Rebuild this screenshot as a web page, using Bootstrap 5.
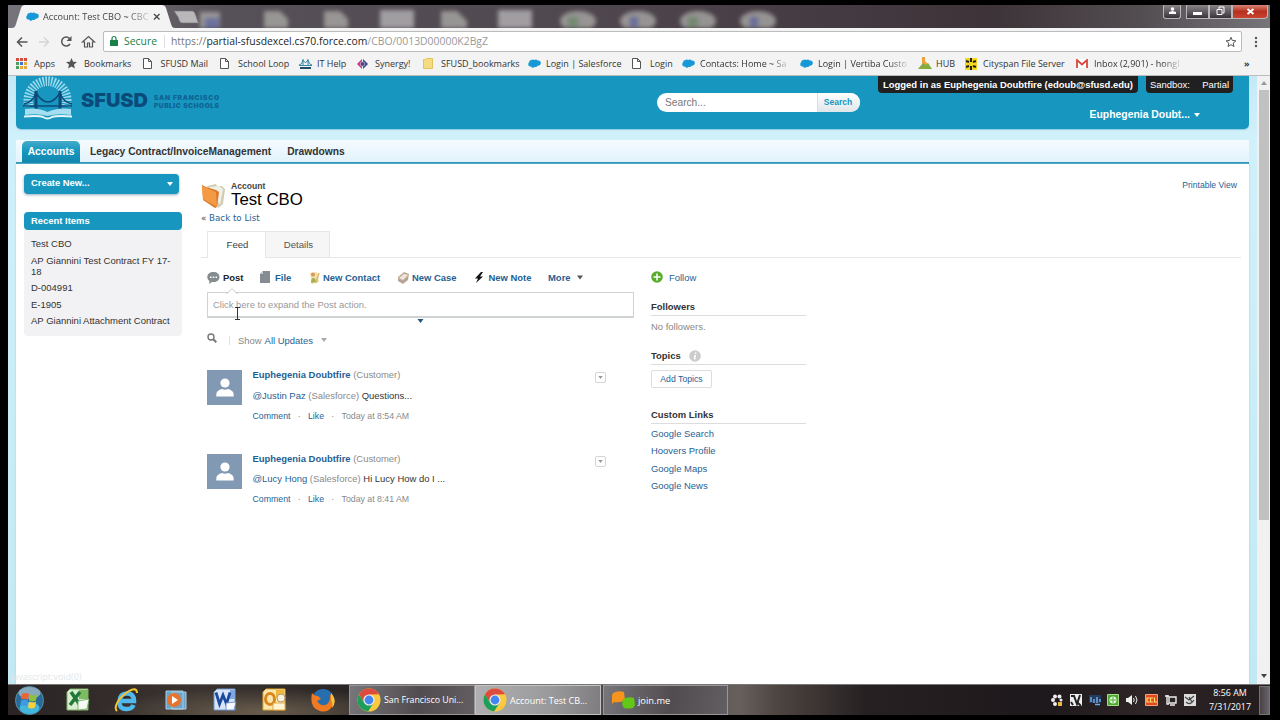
<!DOCTYPE html>
<html lang="en">
<head>
    <meta charset="UTF-8">
    <meta name="viewport" content="width=device-width, initial-scale=1.0">
    <title>Account: Test CBO ~ CBO</title>
    <link href="https://cdn.jsdelivr.net/npm/bootstrap@5.3.0/dist/css/bootstrap.min.css" rel="stylesheet">
    <style>
        body { background: #000; width: 1280px; height: 720px; overflow: hidden; padding: 5px 10px 5px 8px; font: 9.45px/11px "Liberation Sans", Arial, sans-serif; color: #444; }
        a { color: #1f5f94; text-decoration: none; }
        svg { display: block; flex: none; }
        .ui-font { font-family: "Open Sans", "Noto Sans", sans-serif; }

        /* browser window */
        .titlebar { height: 23px; background: linear-gradient(90deg, #77737a 0, #6d6970 9%, #565058 17%, #50484f 45%, #463c44 62%, #3d3338 78%, #534e52 90%, #77757a 100%); }
        .glass { left: 190px; top: 0; filter: blur(2px); opacity: .8; }
        .tab-shape { left: 4px; top: 0; }
        .tab-label { left: 35px; top: 5px; font-size: 9.15px; line-height: 13px; color: #444; }
        .win-btns { top: 0; right: 2px; height: 14px; }
        .win-btn { width: 23px; height: 14px; border: 1px solid #b9b5b9; border-top: 0; background: linear-gradient(#8a8589, #39343a); }
        .win-close { width: 36px; background: linear-gradient(#d78577, #b7301f 50%, #c9442f); border-radius: 0 0 4px 0; }
        .win-user { width: 18px; margin-right: 5px; border-radius: 0 0 3px 3px; }
        .toolbar { height: 24px; background: #f3f3f3; padding-left: 8px; }
        .omnibox { width: 1139px; height: 21px; margin-top: 3px; border: 1px solid #bcbcbc; border-radius: 2px; background: #fff; font-size: 10.4px; color: #999; }
        .omni-sep { height: 13px; margin: 0 6px 0 7px; }
        .bookmarks { height: 24px; background: #f3f3f3; border-bottom: 1px solid #bbb; font-size: 9px; color: #333; grid-template-columns: 50px 76.5px 77.5px 79px 58px 66px 105px 104px 50px 118px 118px 47px 111px 1fr 18px; }
        .bookmarks > div { display: grid; grid-template-columns: 18px auto; align-items: center; justify-content: start; white-space: nowrap; }
        .fade-end { -webkit-mask-image: linear-gradient(90deg, #000 80%, rgba(0, 0, 0, .2)); }

        /* page */
        .viewport { height: 608px; background: linear-gradient(#c4e9f6, #d0f0fa 60px, #cdeff8 180px, #c2e9f3); }
        .page-col { width: 1233px; margin-left: 8px; }
        .banner { height: 53px; background: #1797c0; border-radius: 0 0 5px 5px; box-shadow: 0 1px 1px #8fcbe0; }
        .search-box { left: 641px; top: 17px; width: 203px; height: 19px; border-radius: 10px; background: #fff; overflow: hidden; font-size: 10.2px; color: #777; }
        .search-btn { width: 43px; height: 19px; padding-right: 2px; background: linear-gradient(#fff, #dfe6ea); color: #1797c0; font-size: 8.5px; line-height: 19px; border-left: 1px solid #ddd; }
        .ribbon { top: 0; height: 17px; line-height: 17px; background: #202020; color: #fff; border-radius: 0 0 4px 4px; }
        .user-menu { right: 49px; top: 33px; font-size: 10.4px; line-height: 12px; color: #fff; }
        .tabs-row { height: 24px; margin-top: 11px; padding-left: 6px; background: linear-gradient(#f5fbff, #e2f2fc); border-bottom: 2px solid #2b93b5; font-size: 10.25px; line-height: 23px; color: #333; }
        .tab-on { width: 58px; height: 22px; margin-top: 1px; line-height: 21px; border-radius: 5px 5px 0 0; background: linear-gradient(#45abc9, #1797c0 45%, #1286ae); color: #fff; }
        .sheet { height: 520px; background: #fff; box-shadow: 0 0 2px #9ed3e4; }
        .sidebar-col { width: 158px; margin-left: 8px; padding-top: 10px; }
        .create-btn { width: 155px; height: 20px; border-radius: 4px; background: #1797c0; color: #fff; line-height: 18px; padding: 0 6px 0 7px; box-shadow: 0 1px 3px #9ab; font-size: 9.4px; }
        .recent-head { height: 18px; margin-top: 18px; border-radius: 4px; background: #1797c0; color: #fff; line-height: 18px; padding-left: 7px; }
        .recent-body { height: 106px; background: #f2f2f5; padding: 8px 6px 0 7px; color: #333; border-radius: 0 0 4px 4px; font-size: 9.5px; }
        .recent-body div { margin-bottom: 5.5px; }
        .main-col { width: 1040px; margin-left: 19px; padding-top: 16px; }
        .obj-type { font-size: 8.6px; line-height: 12px; color: #444; }
        .obj-name { font-size: 16.8px; line-height: 16px; color: #000; }
        .back-link { font: 8.7px/11px "DejaVu Sans", sans-serif; margin-top: 4px; }
        .view-tabs { height: 27px; margin-top: 7px; border-bottom: 1px solid #e6e6e6; padding-left: 6px; font-size: 9.6px; }
        .view-tab { height: 27px; line-height: 25px; border: 1px solid #e6e6e6; border-bottom: 0; padding-left: 2px; }
        .actions { height: 14px; margin-top: 12px; }
        .post-box { width: 427px; height: 26px; margin: 8px 0 0 6px; border: 1px solid #d0d3d3; border-bottom-width: 2px; line-height: 23px; padding-left: 5px; color: #999; font-size: 9.45px; }
        .notch { left: 18px; top: -5px; }
        .expander { left: 209px; top: 26px; }
        .ibeam { left: 26px; top: 13px; }
        .filter-row { height: 14px; margin: 15px 0 23px 6px; color: #888; }
        .feed-item { width: 399px; height: 83.7px; margin-left: 6px; }
        .avatar-box { width: 35px; height: 35px; background: #8199b3; }
        .feed-text { margin: -1px 0 0 10.5px; color: #333; }
        .feed-line { margin: 9.5px 0 10px; }
        .feed-dot { padding: 0 7.3px; }
        .quiet { color: #8a8a8a; }
        .meta-row { font-size: 8.75px; }
        .drop-btn { width: 11px; height: 11px; margin-top: 2px; border: 1px solid #d5d5d5; border-radius: 2px; }
        .side-info { width: 155px; margin-left: 17px; color: #888; }
        .side-title { color: #333; border-bottom: 1px solid #ddd; height: 15px; }
        .topic-btn { width: 61px; height: 18px; margin-top: 6px; border: 1px solid #ddd; border-radius: 2px; line-height: 17px; font-size: 8.7px; text-align: center; }
        .link-list a { display: block; height: 17.4px; }
        .print-link { right: 12px; top: 16px; font-size: 8.6px; }
        .status-text { left: 3px; bottom: 2px; font-size: 9px; color: #dfe8ea; }
        .scroll-col { width: 13px; background: #f1f1f1; padding: 5px 1px 6px; }
        .scroll-thumb { width: 10px; height: 430px; background: #c1c1c1; margin-top: 5px; }

        /* taskbar */
        .taskbar { height: 31px; border-top: 1px solid #777; background: radial-gradient(ellipse 160px 24px at 20% 90%, #685c4c, transparent), linear-gradient(90deg, #2a2425, #3a332f 15%, #2a2525 27%, #665f5b 58%, #4e4541 61%, #262022 68%, #1d181b 82%, #2e2526 90%, #221c1e); color: #fff; font-size: 8.8px; }
        .launcher { width: 49px; }
        .task-btn { width: 126px; height: 30px; border: 1px solid #99969a; background: linear-gradient(100deg, #77767a, #514c50 55%, #625e62); padding-left: 7px; }
        .task-on { background: linear-gradient(100deg, #b0b0b2, #99989a 60%, #7e7c7e); border-color: #c3c3c5; }
        .clock { width: 54px; font-size: 8.9px; line-height: 14px; }
        .peek { width: 11px; height: 29px; border: 1px solid #777074; background: linear-gradient(90deg, #494246, #68636a); }
    </style>
</head>
<body>
    <svg class="d-none">
        <symbol id="cloud" viewBox="0 0 13 9"><path fill="#1798d6" d="M3.2 1.2C4.1.3 5.5.3 6.3 1.1 7.2.1 8.9.2 9.6 1.6 11.5 1 13 2.4 12.8 4.3 12.6 6 11.1 7 9.6 6.7 9 7.8 7.7 8.2 6.7 7.7 5.8 9.2 3.7 9 3.1 7.5 1.3 7.7 0 6.3.3 4.7.4 4 .8 3.4 1.4 3 1 2 1.9.9 3.2 1.2z"/></symbol>
        <symbol id="page" viewBox="0 0 9 11"><path fill="#fff" stroke="#555" d="M.5.5h5l3 3v7h-8zM5.5.5v3h3"/></symbol>
        <symbol id="caret" viewBox="0 0 6 4"><path fill="currentColor" d="M0 0h6L3 4z"/></symbol>
        <symbol id="person" viewBox="0 0 18 19"><circle cx="9" cy="5" r="4.6" fill="#fff"/><path fill="#fff" d="M.3 18.5v-2C.3 13 4 11.500 6 11q3 1.3 6 0c2 .5 5.700 2 5.700 5.500v2z"/></symbol>
        <symbol id="chrome" viewBox="0 0 24 24"><circle cx="12" cy="12" r="11.500" fill="#fbc93d"/><path fill="#dd4b3e" d="M2 6.300a11.500 11.500 0 0 1 20 0L12 6.500 7 14.800z"/><path fill="#1d9f5c" d="M2 6.300a11.500 11.500 0 0 0 9 17.200L16.700 14.800H7z"/><circle cx="12" cy="12" r="5.600" fill="#eee"/><circle cx="12" cy="12" r="4.400" fill="#4486f0"/></symbol>
    </svg>

    <!-- title bar -->
    <div class="titlebar position-relative overflow-hidden">
        <svg class="glass position-absolute" width="600" height="23">
            <g fill="#a9a8a5">
                <path d="M2 7h20v16H2zM66 6h16l8 8v9H66zM126 6h16l8 8v9h-24zM243 6h16l10 10v7h-26z"/>
                <path fill="#b5b3b5" d="M182 5h34v18h-34zM300 5h34v18h-34z"/>
                <ellipse cx="380" cy="16" rx="18" ry="10"/><ellipse cx="440" cy="16" rx="18" ry="10"/><ellipse cx="500" cy="16" rx="18" ry="10"/><ellipse cx="560" cy="16" rx="18" ry="10"/>
            </g>
            <path fill="#7079ae" d="M7 13h14v10H7zM432 12h8v10h-8zM552 12h8v10h-8z"/>
            <path fill="#7d9a7b" d="M370 12h10v10h-10zM490 12h10v10h-10z"/>
        </svg>
        <svg class="tab-shape position-absolute" width="190" height="23">
            <path fill="#f3f3f3" d="M0 23c2 0 3-1 4-4L9 3q1-3 4-3h137q3 0 4 3l5 16c1 3 2 4 4 4z"/>
            <path fill="#b9b7b9" stroke="#777" stroke-width=".7" d="M162 6h18c2 0 3 2 4 5s2 7 3 7h-17c-2 0-3-3-4-6z"/>
            <use href="#cloud" x="14" y="7" width="13" height="9"/>
            <path stroke="#444" stroke-width="1.300" d="M142 9l5.500 5.500M147.500 9L142 14.500"/>
        </svg>
        <div class="tab-label fade-end ui-font position-absolute text-nowrap">Account: Test CBO ~ CBC</div>
        <div class="win-btns position-absolute d-flex">
            <div class="win-btn win-user d-flex justify-content-center"><svg width="9" height="10"><circle cx="4.500" cy="4" r="1.800" fill="#fff"/><path fill="#fff" d="M1 9V7l3.500-1L8 7v2z"/></svg></div>
            <div class="win-btn d-flex justify-content-center"><svg width="9" height="12"><path fill="#fff" d="M0 7h9v3H0z"/></svg></div>
            <div class="win-btn d-flex justify-content-center"><svg width="9" height="12" fill="none" stroke="#fff"><path d="M3 4V2h5v6H6.500M1 4.500h5v5H1z"/></svg></div>
            <div class="win-btn win-close d-flex justify-content-center"><svg width="9" height="12" stroke="#fff" stroke-width="2"><path d="M1.500 4l6 5M7.500 4l-6 5"/></svg></div>
        </div>
    </div>

    <!-- address bar -->
    <div class="toolbar ui-font d-flex">
        <svg width="87" height="24" fill="none" stroke="#555" stroke-width="1.500">
            <path d="M11.500 14H2M6 9.500L1.500 14 6 18.500"/>
            <path stroke="#d5d5d5" d="M23 14h9M28 9.500l4.500 4.500-4.500 4.500"/>
            <path d="M53.500 10.500A4.500 4.500 0 1 0 54 16"/><path fill="#555" stroke="none" d="M55.500 8v5h-5z"/>
            <path d="M66.500 14l6-5.500 6 5.500h-2v5h-3v-4h-2v4h-3v-5z" stroke-width="1.200"/>
        </svg>
        <div class="omnibox d-flex align-items-center">
            <svg width="20" height="19"><path fill="#188048" d="M6 8h8v6H6z"/><path fill="none" stroke="#188048" stroke-width="1.200" d="M8 8V6.500a2 2 0 0 1 4 0V8"/></svg>
            <span style="color:#188048">Secure</span>
            <span class="omni-sep border-end"></span>
            <span><span style="color:#777">https://</span><span class="text-dark">partial-sfusdexcel.cs70.force.com</span>/CBO/0013D00000K2BgZ</span>
            <svg class="ms-auto me-1" width="12" height="12"><path fill="none" stroke="#555" d="M6 1.300l1.400 3.200 3.500.3-2.700 2.300.8 3.400-3-1.800-3 1.800.8-3.400L1.100 4.800l3.500-.3z"/></svg>
        </div>
        <svg class="ms-auto" width="22" height="24" fill="#555"><circle cx="8" cy="10" r="1.200"/><circle cx="8" cy="14" r="1.200"/><circle cx="8" cy="18" r="1.200"/></svg>
    </div>

    <!-- bookmarks -->
    <div class="bookmarks ui-font d-grid px-2">
        <div><svg width="11" height="11"><path fill="#d64b3c" d="M0 0h3v3H0zM4 0h3v3H4zM8 0h3v3H8z"/><path fill="#4a9c62" d="M0 4h3v3H0z"/><path fill="#4275c9" d="M4 4h3v3H4z"/><path fill="#e5a740" d="M8 4h3v3H8zM4 8h3v3H4zM8 8h3v3H8z"/><path fill="#4a9c62" d="M0 8h3v3H0z"/></svg><span>Apps</span></div>
        <div><svg width="11" height="11"><path fill="#555" d="M5.500 0l1.600 3.700 3.900.3-3 2.600.9 4-3.400-2.100L2.100 10.600l.9-4L0 4l3.900-.3z"/></svg><span>Bookmarks</span></div>
        <div><svg width="9" height="11"><use href="#page"/></svg><span>SFUSD Mail</span></div>
        <div><svg width="9" height="11"><use href="#page"/></svg><span>School Loop</span></div>
        <div><svg width="13" height="12"><path fill="none" stroke="#3987a6" d="M0 7q3 0 4-5 2.500 5 5 0 1 5 4 5M0 7.500h13M4 1v7M9 1v7"/><path fill="#234e6a" d="M1 9h11v2H1z"/></svg><span>IT Help</span></div>
        <div><svg width="11" height="10"><path fill="#c7397d" d="M5 0v10L0 5z"/><path fill="#34488f" d="M6 0v10l5-5z"/><circle cx="5.500" cy="5" r="2.300" fill="#57427f" stroke="#d5c3da" stroke-width=".7"/></svg><span>Synergy!</span></div>
        <div><svg width="10" height="11"><path fill="#f6dc80" stroke="#e2c25d" d="M.5 1.500h2l1-1h6v10h-9z"/></svg><span>SFUSD_bookmarks</span></div>
        <div><svg width="13" height="9"><use href="#cloud"/></svg><span>Login | Salesforce</span></div>
        <div><svg width="9" height="11"><use href="#page"/></svg><span>Login</span></div>
        <div><svg width="13" height="9"><use href="#cloud"/></svg><span class="fade-end">Contacts: Home ~ Sa</span></div>
        <div><svg width="13" height="9"><use href="#cloud"/></svg><span class="fade-end">Login | Vertiba Custo</span></div>
        <div><svg width="14" height="13"><path fill="#eda23b" d="M4 0h3v4l4 4-4 2-3-4z"/><path fill="#85ad3e" d="M0 12l5-6 3 2 2-2 4 6z"/></svg><span>HUB</span></div>
        <div><svg width="12" height="12"><path fill="#f4d520" d="M0 0h12v12H0z"/><path stroke="#222" stroke-width="2" d="M6 0v4M6 8v4M1 3l3 1M8 8l3 1M1 9l3-1M8 4l3-1"/></svg><span>Cityspan File Server</span></div>
        <div><svg width="12" height="9"><path fill="#fff" d="M0 0h12v9H0z"/><path fill="none" stroke="#d7493c" stroke-width="1.800" d="M1 9V1l5 4.500L11 1v8"/></svg><span class="fade-end">Inbox (2,901) - hongl</span></div>
        <div class="fw-bold">»</div>
    </div>

    <!-- page -->
    <div class="viewport d-flex position-relative overflow-hidden">
        <div class="page-col">
            <div class="banner position-relative">
                <svg style="margin-left:7px" width="210" height="46">
                    <path fill="none" stroke="#9bd9ec" stroke-width="9.500" stroke-dasharray="1.500 1.300" d="M6 30A19.300 19.300 0 1 1 43 30"/>
                    <path fill="none" stroke="#0d4978" stroke-width="1.500" d="M0 30h49M1 28Q10 26 13 17q12 18 24 0 3 9 12 11"/>
                    <path fill="none" stroke="#0d4978" stroke-width="3" d="M13 15v19M37 15v19"/>
                    <path fill="#a5def0" d="M2 33q13-2 22.500 3 10-5 23.500-3v6q-14-2-23.500 1Q15 37 2 39z"/>
                    <path fill="none" stroke="#e4f8fc" stroke-width="2" d="M1 40.500q15-1 19 .5 4.500 3 9 0 5-1.500 20-.5"/>
                    <text x="58" y="31" textLength="67" lengthAdjust="spacingAndGlyphs" font-family="Inter" font-weight="900" font-size="19" fill="#0b4b7c">SFUSD</text>
                    <text x="131" y="24" textLength="65" font-family="Inter" font-weight="900" font-size="6.600" fill="#0f6292">SAN FRANCISCO</text>
                    <text x="131" y="32" textLength="65" font-family="Inter" font-weight="900" font-size="6.600" fill="#0f6292">PUBLIC SCHOOLS</text>
                </svg>
                <div class="search-box position-absolute d-flex align-items-center">
                    <span class="ps-2">Search...</span>
                    <div class="search-btn ms-auto fw-bold text-center">Search</div>
                </div>
                <div class="ribbon position-absolute fw-bold text-center text-nowrap" style="left:862px;width:260px">Logged in as Euphegenia Doubtfire (edoub@sfusd.edu)</div>
                <div class="ribbon position-absolute d-flex justify-content-between px-1" style="left:1130px;width:87px"><span>Sandbox:</span><span>Partial</span></div>
                <div class="user-menu position-absolute fw-bold d-flex align-items-center gap-1">Euphegenia Doubt...<svg width="6" height="4"><use href="#caret"/></svg></div>
            </div>
            <div class="tabs-row d-flex fw-bold">
                <div class="tab-on text-center">Accounts</div>
                <div style="margin-left:10px">Legacy Contract/InvoiceManagement</div>
                <div class="ms-3">Drawdowns</div>
            </div>
            <div class="sheet d-flex position-relative">
                <div class="sidebar-col">
                    <div class="create-btn fw-bold d-flex justify-content-between">Create New...<svg class="mt-2" width="6" height="4"><use href="#caret"/></svg></div>
                    <div class="recent-head fw-bold">Recent Items</div>
                    <div class="recent-body">
                        <div>Test CBO</div>
                        <div>AP Giannini Test Contract FY 17-<br>18</div>
                        <div>D-004991</div>
                        <div>E-1905</div>
                        <div>AP Giannini Attachment Contract</div>
                    </div>
                </div>
                <div class="main-col">
                    <div class="d-flex">
                        <svg style="margin-top:3px" width="25" height="26">
                            <path fill="#cfcdb4" d="M6 3l9-2 1 2 5 0 3 3-2 15-5 4z"/>
                            <path fill="#f2f0e6" d="M8 4l10-1 4 3-3 16z"/>
                            <path fill="#d9772a" d="M1 2l4 2 10 3 3 2-2 15-2 1L2 17z"/>
                            <path fill="#f39a45" d="M1 3l14 6 1 15L2 16z"/>
                        </svg>
                        <div style="margin-left:5px">
                            <div class="obj-type fw-bold">Account</div>
                            <div class="obj-name">Test CBO</div>
                        </div>
                    </div>
                    <div class="back-link">« <a href="#">Back to List</a></div>
                    <div class="view-tabs d-flex">
                        <div class="view-tab bg-white text-center" style="width:59px">Feed</div>
                        <div class="view-tab text-center" style="width:64px;height:26px;background:#f6f6f7;border-left:0;color:#555">Details</div>
                    </div>
                    <div class="d-flex">
                        <div>
                            <div class="actions d-flex align-items-center fw-bold" style="padding-left:6px">
                                <svg width="13" height="13"><path fill="#858c90" d="M6.500 1C10 1 12.500 3 12.500 6s-2.500 5-6 5H5l-3 2 .5-3C1 9 .3 7.500.3 6c0-3 2.500-5 6.200-5z"/><path fill="#fff" d="M3 5.500h1.500V7H3zM5.800 5.500h1.500V7H5.800zM8.600 5.500h1.500V7H8.600z"/></svg>
                                <span class="text-dark" style="margin-left:3px;width:37px">Post</span>
                                <svg width="10" height="12"><path fill="#858c94" d="M3 0h7v12H0V3z"/><path fill="#c5c9cd" d="M0 3l3-3v3z"/></svg>
                                <a style="margin-left:5px;width:34px" href="#">File</a>
                                <svg width="11" height="13"><path fill="#eedfad" d="M1 2l7-1 2 10-7 2z"/><circle cx="4" cy="3.500" r="2" fill="#de9559"/><path fill="#a8b04e" d="M2 12c0-4 1-5 2.500-5S7 9 7 11z"/><path stroke="#d7b96b" stroke-width="1.500" d="M10 2L7 12"/></svg>
                                <a style="margin-left:3px;width:74px" href="#">New Contact</a>
                                <svg width="12" height="13"><path fill="#c0aa98" d="M1 6l6-5 5 2-1 6-5 4-5-3z"/><path fill="#f0e6dc" d="M2 7l5-4 4 1-5 5z"/><path fill="none" stroke="#a39c98" d="M2 9l4 2 5-4"/></svg>
                                <a style="margin-left:3px;width:63px" href="#">New Case</a>
                                <svg width="8" height="11"><path fill="#111" d="M6 0L0 6.500h3L1 11l7-6.500H5L8 0z"/></svg>
                                <a style="margin-left:5.5px;width:59.5px" href="#">New Note</a>
                                <a href="#">More</a>
                                <svg style="margin-left:6px" width="6" height="5" color="#555"><use href="#caret"/></svg>
                            </div>
                            <div class="post-box position-relative">Click here to expand the Post action.
                                <svg class="notch position-absolute" width="12" height="6"><path fill="#fff" stroke="#ccc" d="M0 5.500h1L6 .7l5 4.800h1"/></svg>
                                <svg class="expander position-absolute" width="7" height="4" color="#25557d"><use href="#caret"/></svg>
                                <svg class="ibeam position-absolute" width="7" height="15"><path fill="none" stroke="#333" d="M1 1.500h5M1 13.500h5M3.500 1.500v12"/></svg>
                            </div>
                            <div class="filter-row d-flex align-items-center">
                                <svg class="mb-1" width="10" height="10"><circle cx="4" cy="4" r="3" fill="none" stroke="#777" stroke-width="1.400"/><path stroke="#777" stroke-width="2" d="M6 6l3.300 3.300"/></svg>
                                <span class="border-end" style="width:13px;height:9px"></span>
                                <span style="margin-left:8px;margin-right:3px">Show</span><a href="#">All Updates</a>
                                <svg class="ms-2" width="6" height="4" color="#aaa"><use href="#caret"/></svg>
                            </div>
                            <div class="feed-item d-flex">
                                <div class="avatar-box d-flex justify-content-center align-items-center"><svg width="18" height="19"><use href="#person"/></svg></div>
                                <div class="feed-text">
                                    <div><a class="fw-bold" href="#">Euphegenia Doubtfire</a> <span class="quiet">(Customer)</span></div>
                                    <div class="feed-line"><a href="#">@Justin Paz</a> <span class="quiet">(Salesforce)</span> Questions...</div>
                                    <div class="meta-row quiet d-flex"><a href="#">Comment</a><span class="feed-dot">·</span><a href="#">Like</a><span class="feed-dot">·</span>Today at 8:54 AM</div>
                                </div>
                                <div class="drop-btn ms-auto d-flex justify-content-center align-items-center"><svg width="5" height="3" color="#999"><use href="#caret"/></svg></div>
                            </div>
                            <div class="feed-item d-flex">
                                <div class="avatar-box d-flex justify-content-center align-items-center"><svg width="18" height="19"><use href="#person"/></svg></div>
                                <div class="feed-text">
                                    <div><a class="fw-bold" href="#">Euphegenia Doubtfire</a> <span class="quiet">(Customer)</span></div>
                                    <div class="feed-line"><a href="#">@Lucy Hong</a> <span class="quiet">(Salesforce)</span> Hi Lucy How do I ...</div>
                                    <div class="meta-row quiet d-flex"><a href="#">Comment</a><span class="feed-dot">·</span><a href="#">Like</a><span class="feed-dot">·</span>Today at 8:41 AM</div>
                                </div>
                                <div class="drop-btn ms-auto d-flex justify-content-center align-items-center"><svg width="5" height="3" color="#999"><use href="#caret"/></svg></div>
                            </div>
                        </div>
                        <div class="side-info">
                            <div class="actions d-flex align-items-center"><svg width="12" height="12"><circle cx="6" cy="6" r="5.800" fill="#58ad2c"/><path stroke="#fff" stroke-width="1.500" d="M6 2.500v7M2.500 6h7"/></svg><a style="margin-left:6px" href="#">Follow</a></div>
                            <div class="side-title fw-bold" style="margin-top:17px">Followers</div>
                            <div style="margin-top:5px">No followers.</div>
                            <div class="side-title fw-bold d-flex" style="margin-top:18px">Topics<svg class="ms-2" width="12" height="12"><circle cx="6" cy="6" r="5.800" fill="#ccc"/><path stroke="#fff" stroke-width="1.600" d="M6.300 5L5.500 9.500M6.600 2.500v1.500"/></svg></div>
                            <div class="topic-btn" style="margin-top:5px">
                                <a href="#">Add Topics</a>
                            </div>
                            <div class="side-title fw-bold" style="margin-top:21px">Custom Links</div>
                            <div class="link-list" style="margin-top:4px">
                                <a href="#">Google Search</a>
                                <a href="#">Hoovers Profile</a>
                                <a href="#">Google Maps</a>
                                <a href="#">Google News</a>
                            </div>
                        </div>
                    </div>
                </div>
                <a class="print-link position-absolute" href="#">Printable View</a>
            </div>
        </div>
        <div class="status-text ui-font position-absolute">javascript:void(0)</div>
        <div class="scroll-col ms-auto h-100 d-flex flex-column align-items-center">
            <svg width="6" height="4" color="#999"><use href="#caret" transform="rotate(180 3 2)"/></svg>
            <div class="scroll-thumb"></div>
            <svg class="mt-auto" width="6" height="4" color="#444"><use href="#caret"/></svg>
        </div>
    </div>

    <!-- taskbar -->
    <div class="taskbar ui-font d-flex align-items-center">
        <div class="d-flex justify-content-center" style="width:45px;padding-right:2px"><svg width="29" height="29">
            <circle cx="14.500" cy="14.500" r="14" fill="#286b99" stroke="#5d8ba5"/><ellipse cx="14.500" cy="22" rx="10" ry="6" fill="#43b6dd"/><ellipse cx="14.500" cy="7" rx="11" ry="6" fill="#86a9bd"/>
            <path fill="#ee6332" d="M7 8q4-2 7 0l-1 6q-3-2-7-.5z"/><path fill="#8ebf3e" d="M15 8.500q4 2 7 0l-1 6q-4 2-7 0z"/><path fill="#3e9ae0" d="M6 14.500q4-2 7 0l-1 6q-3-2-7 0z"/><path fill="#fbd03f" d="M14 15.500q4 2 7 0l-1 6q-4 2-7 0z"/></svg></div>
        <div class="launcher d-flex justify-content-center"><svg width="24" height="24">
            <path fill="#d9eecf" stroke="#7db567" d="M4 1h18v21H1V4z"/><path fill="#7dbb63" d="M13 2h9v9h-9z"/><path stroke="#1f7a38" stroke-width="3.500" d="M5 4l9 13M14 4L4 17"/><path fill="#f5f9f3" stroke="#6ca65d" stroke-width=".8" d="M12 13l11-2-2 10-9 1z"/></svg></div>
        <div class="launcher d-flex justify-content-center"><svg width="25" height="25">
            <path fill="none" stroke="#4fb9ef" stroke-width="4.500" d="M6 13h14q0-7.500-7-7.500T5.500 13.500 13 21q5 0 6.500-4"/><path fill="none" stroke="#f3c42c" stroke-width="2" d="M3 23C-1 19 5 10 12 5S23 0 23 5"/></svg></div>
        <div class="launcher d-flex justify-content-center"><svg width="22" height="21">
            <path fill="#6ba5cb" stroke="#a9cbe0" d="M7 2h14v17H7zM1 1h17v18H1z"/><circle cx="9" cy="10" r="7" fill="#e8742b"/><path fill="#fff" d="M7 6l6 4-6 4z"/></svg></div>
        <div class="launcher d-flex justify-content-center"><svg width="24" height="24">
            <path fill="#d8e6f8" stroke="#6f95cf" d="M4 1h18v21H1V4z"/><path fill="#7fa8df" d="M17 2h5v9h-5z"/><path fill="none" stroke="#1d4a9e" stroke-width="2.800" d="M3 4.500L6.500 16l3.500-9 3.500 9L17 4.500"/><path fill="#f5f8fd" stroke="#5b83c3" stroke-width=".8" d="M13 15l10-1-2 8h-8z"/></svg></div>
        <div class="launcher d-flex justify-content-center"><svg width="24" height="24">
            <path fill="#fbe7ad" stroke="#e3a82c" d="M4 1h19v21H1V4z"/><path fill="#f0b838" d="M14 2h8v8h-8z"/><ellipse cx="8" cy="11" rx="4.500" ry="5.500" fill="none" stroke="#d9861a" stroke-width="3"/><path fill="#fff5d5" stroke="#d89a2a" stroke-width=".8" d="M11 15h12v7H11z"/><circle cx="19" cy="10" r="4" fill="#faf1df" stroke="#b79a6d"/></svg></div>
        <div class="launcher d-flex justify-content-center"><svg width="25" height="25">
            <circle cx="13" cy="12" r="11" fill="#266eae"/><path fill="#f07a22" d="M2 5q2 3 6 3l3 3-4 2q3 5 8 4 6-2 5-11 6 7 2 13-5 6-12 4Q-1 20 2 5z"/><path fill="#f9c23c" d="M21 5q7 8 1 15 1-6-1-8z"/></svg></div>
        <div class="task-btn d-flex align-items-center text-nowrap" style="margin-left:2px"><svg width="24" height="24"><use href="#chrome"/></svg><span style="padding-left:3px">San Francisco Uni...</span></div>
        <div class="task-btn task-on d-flex align-items-center text-nowrap"><svg width="24" height="24"><use href="#chrome"/></svg><span style="padding-left:3px;font-size:9px">Account: Test CB...</span></div>
        <div class="task-btn d-flex align-items-center" style="margin-left:2px;width:125px"><svg width="24" height="18"><path fill="#f7941e" d="M2 2q5-3 11-1l1 8q-5 3-11 2l-2 2V4z"/><path fill="#63c717" d="M12 8q6-3 11-1l1 7-2 3q-5 1-9 0-3-3-1-9z"/></svg><span style="padding-left:3px;font-size:9.300px">join.me</span></div>
        <div class="ms-auto d-flex align-items-center" style="gap:6.900px">
            <svg width="12" height="12"><g fill="#eee"><circle cx="4" cy="2.500" r="2"/><circle cx="8.500" cy="2.500" r="2"/><circle cx="2" cy="6" r="2"/><circle cx="4" cy="10" r="2"/><circle cx="10" cy="6" r="1.500"/></g><path fill="#e9b83a" d="M7 8h4v4H7z"/></svg>
            <svg width="12" height="12"><path fill="#eee" d="M0 0h12v12H0z"/><path fill="none" stroke="#222" stroke-width="2" d="M1 2h3l3 8 3-9M8 9l3 3M1 8l2 3"/></svg>
            <svg width="12" height="12"><path fill="#233b60" d="M0 1h12v8H0z"/><path fill="none" stroke="#70a8e0" stroke-width="1.500" d="M2 3v5M5 5v4M8 3v6M11 5v3M6 10.500h5"/></svg>
            <svg width="12" height="12"><path fill="#4eaa34" stroke="#a8da8b" d="M.5.500h11v11H.5z"/><circle cx="6" cy="6" r="3.500" fill="#e6f6df"/><path stroke="#4eaa34" d="M6 3v6M3 6h6"/></svg>
            <svg width="12" height="12"><path fill="#eee" d="M0 4h2l4-3v10L2 8H0z"/><path fill="none" stroke="#eee" d="M7.500 4q1.500 2 0 4M9.500 2q3 4 0 8"/></svg>
            <svg width="13" height="12"><path fill="#e34824" stroke="#f2a07a" d="M.5.500h12v11H.5z"/><path fill="none" stroke="#ffe067" stroke-width="1.200" d="M4.500 4H2v4h2.500M8 4H5.500v4H8M9.500 3.500v4.500H12"/></svg>
            <svg width="12" height="12"><path fill="none" stroke="#eee" stroke-width="1.400" d="M4 3h7v6H4zM5 11h5M2 1v9h2M0 2h4"/></svg>
            <svg width="12" height="12"><path fill="#ddd" d="M0 0h12v12H0z"/><path fill="none" stroke="#444" stroke-width="1.300" d="M1 3l4 3 5-4M2 8q4 4 8-2M5 3l3 5"/></svg>
        </div>
        <div class="clock text-center" style="margin-left:7px">8:56 AM<br>7/31/2017</div>
        <div class="peek" style="margin-left:2px"></div>
    </div>

    <script src="https://cdn.jsdelivr.net/npm/bootstrap@5.3.0/dist/js/bootstrap.bundle.min.js"></script>
</body>
</html>
